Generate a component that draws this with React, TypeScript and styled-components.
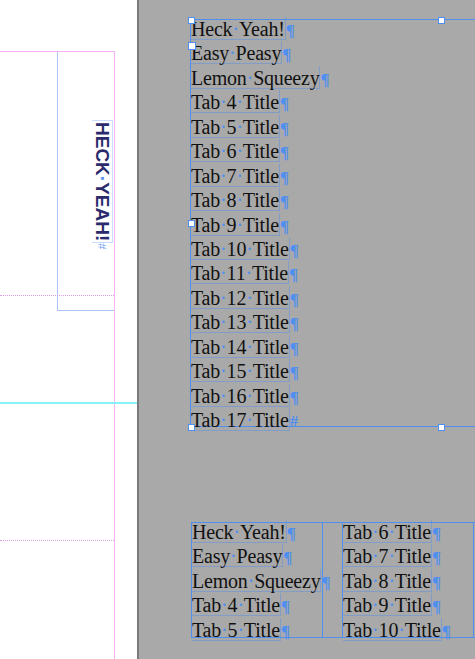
import React from "react";
import styled, { createGlobalStyle } from "styled-components";

const BLUE = "#4f8ff0";
const FAINT_BLUE = "rgba(80, 140, 235, 0.45)";

const GlobalStyle = createGlobalStyle`
  html, body {
    margin: 0;
    padding: 0;
    overflow: hidden;
    background: #a9a9a9;
  }
`;

const firstFrameTabs = [
  "Heck Yeah!",
  "Easy Peasy",
  "Lemon Squeezy",
  ...Array.from({ length: 14 }, (_, i) => `Tab ${i + 4} Title`),
];

const columnOne = ["Heck Yeah!", "Easy Peasy", "Lemon Squeezy", "Tab 4 Title", "Tab 5 Title"];
const columnTwo = ["Tab 6 Title", "Tab 7 Title", "Tab 8 Title", "Tab 9 Title", "Tab 10 Title"];

// spaces shown as InDesign hidden characters
function withHiddenSpaces(text: string) {
  const words = text.split(" ");
  return words.map((word, i) => (
    <React.Fragment key={i}>
      {word}
      {i < words.length - 1 && <SpaceDot>·</SpaceDot>}
    </React.Fragment>
  ));
}

function TextLines({ items, endWithHash }: { items: string[]; endWithHash?: boolean }) {
  return (
    <LineStack>
      {items.map((item, i) => (
        <Line key={item}>
          <LineText>{withHiddenSpaces(item)}</LineText>
          <Mark>{endWithHash && i === items.length - 1 ? "#" : "¶"}</Mark>
        </Line>
      ))}
    </LineStack>
  );
}

export default function App() {
  return (
    <Workspace>
      <GlobalStyle />
      <Page>
        <Guide $top={51} $width={114} $color="#f4b0f4" />
        <VerticalGuide />
        <Guide $top={295} $width={114} $color="#dc9ce8" $dotted />
        <Guide $top={402} $width={137} $color="#86f1f6" $thick />
        <Guide $top={540} $width={114} $color="#dc9ce8" $dotted />
        <SpineFrame>
          <VerticalStory>
            <SpineText>
              HECK<SpaceDot>·</SpaceDot>YEAH!
            </SpineText>
            <StoryEnd>#</StoryEnd>
          </VerticalStory>
        </SpineFrame>
      </Page>
      <Pasteboard>
        <ListFrame>
          <Handle $x={-3} $y={-3} />
          <Handle $x={-3} $y={22} $size={8} />
          <Handle $x={-3} $y={200} />
          <Handle $x={-3} $y={404} />
          <Handle $x={247} $y={-3} />
          <Handle $x={247} $y={404} />
          <TextLines items={firstFrameTabs} endWithHash />
        </ListFrame>
        <ColumnFrame>
          <Column>
            <TextLines items={columnOne} />
          </Column>
          <SecondColumn>
            <TextLines items={columnTwo} />
          </SecondColumn>
        </ColumnFrame>
      </Pasteboard>
    </Workspace>
  );
}

const Workspace = styled.div`
  display: flex;
  width: 475px;
  height: 659px;
  overflow: hidden;
`;

const Page = styled.div`
  position: relative;
  flex: none;
  width: 139px;
  height: 100%;
  padding-top: 51px;
  box-sizing: border-box;
  background: #ffffff;
  border-right: 2px solid #7a7a7a;
`;

const Guide = styled.div<{ $top: number; $width: number; $color: string; $dotted?: boolean; $thick?: boolean }>`
  position: absolute;
  left: 0;
  top: ${(p) => p.$top}px;
  width: ${(p) => p.$width}px;
  height: 0;
  border-top: ${(p) => (p.$thick ? 2 : 1)}px ${(p) => (p.$dotted ? "dotted" : "solid")} ${(p) => p.$color};
`;

const VerticalGuide = styled.div`
  position: absolute;
  left: 114px;
  top: 51px;
  bottom: 0;
  border-left: 1px solid #f6b4f6;
`;

const SpineFrame = styled.div`
  display: flex;
  justify-content: flex-end;
  align-items: flex-start;
  width: 57px;
  height: 260px;
  margin-left: 57px;
  padding: 69px 1px 0 0;
  box-sizing: border-box;
  border-left: 1px solid #a9c4fb;
  border-bottom: 1px solid #a9c4fb;
`;

const VerticalStory = styled.div`
  writing-mode: vertical-rl;
  font-family: "Liberation Sans", Arial, sans-serif;
`;

const SpineText = styled.span`
  display: inline-block;
  padding: 1px 0;
  font-size: 19px;
  font-weight: 700;
  line-height: 20px;
  color: #2a2a6c;
  border: 1px solid rgba(150, 185, 250, 0.5);
  border-left: none;
`;

const StoryEnd = styled.span`
  font-size: 11px;
  color: #6fa3f5;
`;

const Pasteboard = styled.div`
  flex: 1;
  display: flex;
  flex-direction: column;
  background: #a9a9a9;
`;

const ListFrame = styled.div`
  position: relative;
  height: 406px;
  margin: 19px 0 0 51px;
  border: 1px solid ${BLUE};
  border-right: none;
`;

const Handle = styled.div<{ $x: number; $y: number; $size?: number }>`
  position: absolute;
  left: ${(p) => p.$x}px;
  top: ${(p) => p.$y}px;
  width: ${(p) => p.$size ?? 7}px;
  height: ${(p) => p.$size ?? 7}px;
  box-sizing: border-box;
  background: #ffffff;
  border: 1px solid ${BLUE};
  z-index: 1;
`;

const ColumnFrame = styled.div`
  display: flex;
  height: 114px;
  margin: 95px 0 0 52px;
  border: 1px solid ${BLUE};
  border-right: none;
`;

const Column = styled.div`
  width: 130px;
  flex: none;
  border-right: 1px solid ${BLUE};
`;

const SecondColumn = styled(Column)`
  margin-left: 19px;
  border-left: 1px solid ${BLUE};
`;

const LineStack = styled.div`
  margin-top: -3px;
  font-family: "Liberation Serif", "Times New Roman", serif;
  font-size: 20px;
  line-height: 24.45px;
  color: #111111;
  white-space: nowrap;
`;

const Line = styled.div`
  height: 24.45px;
`;

const LineText = styled.span`
  display: inline-block;
  height: 22px;
  letter-spacing: -0.2px;
  border-bottom: 1px solid ${FAINT_BLUE};
  border-right: 1px solid ${FAINT_BLUE};
`;

const SpaceDot = styled.span`
  color: ${BLUE};
`;

const Mark = styled.span`
  font-size: 17px;
  font-weight: 700;
  color: ${BLUE};
`;
